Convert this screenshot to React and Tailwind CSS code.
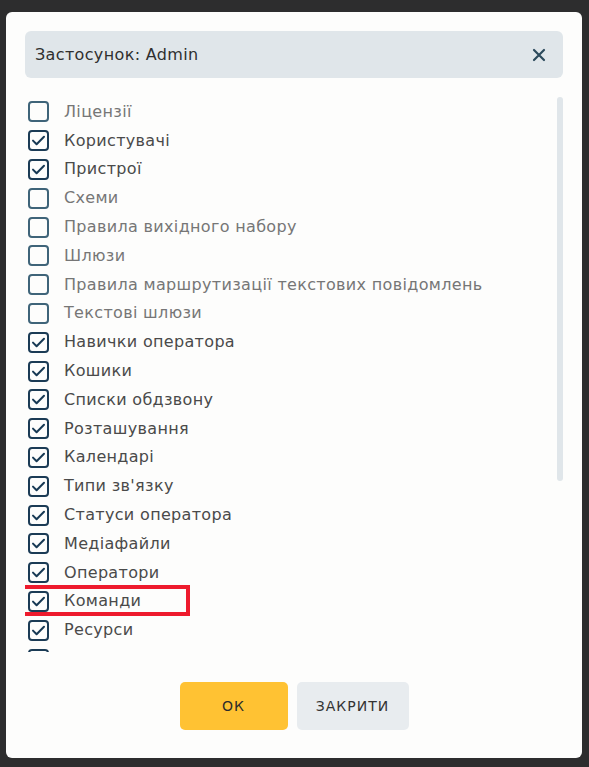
import React from "react";

const items = [
  ["Ліцензії", false],
  ["Користувачі", true],
  ["Пристрої", true],
  ["Схеми", false],
  ["Правила вихідного набору", false],
  ["Шлюзи", false],
  ["Правила маршрутизації текстових повідомлень", false],
  ["Текстові шлюзи", false],
  ["Навички оператора", true],
  ["Кошики", true],
  ["Списки обдзвону", true],
  ["Розташування", true],
  ["Календарі", true],
  ["Типи зв'язку", true],
  ["Статуси оператора", true],
  ["Медіафайли", true],
  ["Оператори", true],
  ["Команди", true],
  ["Ресурси", true],
  ["Маршрути дзвінків", true],
];

function Box({ checked }) {
  return (
    <span
      className={
        "flex h-[21px] w-[21px] shrink-0 items-center justify-center rounded-[4px] border-2 " +
        (checked ? "border-[#1b3b55]" : "border-[#3f6479]")
      }
    >
      {checked && (
        <svg width="15" height="15" viewBox="0 0 15 15" fill="none">
          <path d="M2 7.6 L5.6 11.2 L13 3.8" stroke="#173954" strokeWidth="2" strokeLinecap="round" strokeLinejoin="round" />
        </svg>
      )}
    </span>
  );
}

export default function App() {
  return (
    <div
      className="h-[767px] w-[589px] overflow-hidden bg-[#2d2d2e] pl-[6px] pt-[12px]"
      style={{ fontFamily: '"DejaVu Sans", "Noto Sans", sans-serif' }}
    >
      <div className="flex h-[746px] w-[576px] flex-col rounded-[6px] bg-[#fdfdfc] px-[19px] pt-[19px]">
        <div className="flex h-[47px] items-center justify-between rounded-[6px] bg-[#e0e6ea] pl-[10px] pr-[17px]">
          <span className="text-[16px] tracking-[0.35px] text-[#2f2f2f]">Застосунок: Admin</span>
          <svg width="14" height="14" viewBox="0 0 14 14" fill="none">
            <path d="M2 2 L12 12 M12 2 L2 12" stroke="#2c4a5c" strokeWidth="2.2" strokeLinecap="round" />
          </svg>
        </div>
        <div className="mt-[19px] flex h-[555px] overflow-hidden">
          <div className="flex flex-1 flex-col">
            {items.map(([label, checked]) => (
              <div key={label} className="relative flex h-[28.8px] shrink-0 items-center gap-[15px] pl-[3px] pt-[1px]">
                <Box checked={checked} />
                <span className={"whitespace-nowrap text-[16px] tracking-[0.33px] " + (checked ? "text-[#4a4a4a]" : "text-[#767676]")}>
                  {label}
                </span>
                {label === "Команди" && (
                  <span className="absolute left-[-8px] top-[-1.5px] h-[31px] w-[173px] border-[4px] border-[#ee1b2d]" />
                )}
              </div>
            ))}
          </div>
          <div className="h-[384px] w-[6px] rounded-[3px] bg-[#e0e6ea]" />
        </div>
        <div className="mt-[30px] flex justify-center gap-[9px]">
          <button className="h-[48px] w-[108px] rounded-[5px] bg-[#ffc233] text-[14px] tracking-[1px] text-[#2b2b2b]">
            ОК
          </button>
          <button className="h-[48px] w-[112px] rounded-[5px] bg-[#e8ecef] text-[14px] tracking-[1px] text-[#333]">
            ЗАКРИТИ
          </button>
        </div>
      </div>
    </div>
  );
}
